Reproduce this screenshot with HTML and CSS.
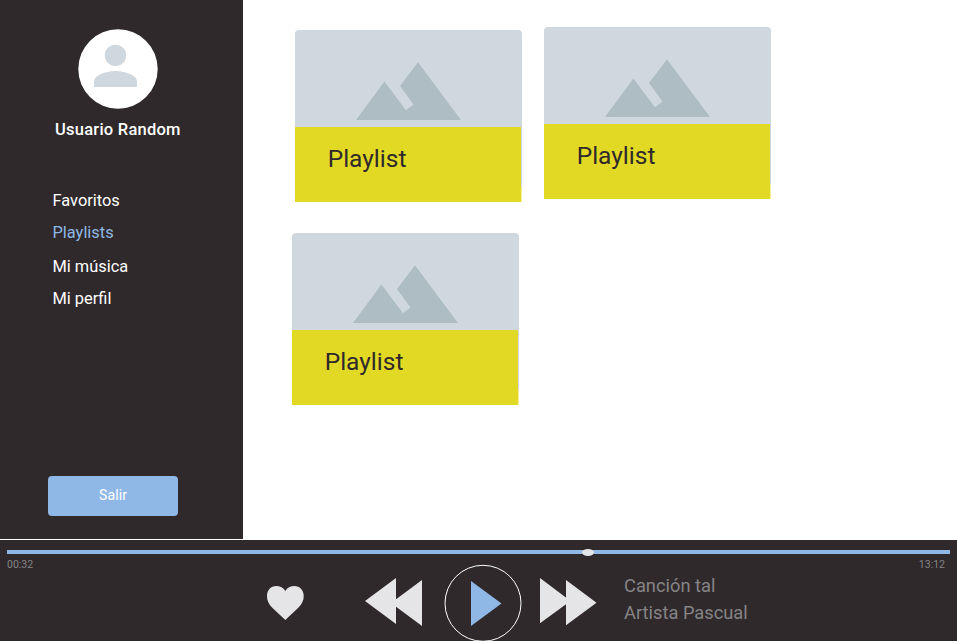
FILE: index.html
```html
<!DOCTYPE html>
<html lang="es">
<head>
<meta charset="utf-8">
<title>Playlists</title>
<link rel="stylesheet" href="styles.css">
</head>
<body>
<svg class="defs" width="0" height="0">
  <symbol id="mountains" viewBox="0 0 227 97"><path d="M61 90 89.4 51.5 111 80.2 118.5 74.5 105 56 123 32.3 166 90z"/></symbol>
</svg>
<div class="app">
  <div class="main">
    <aside class="sidebar">
      <svg class="avatar" viewBox="0 0 80 80">
        <circle cx="40" cy="40" r="39.7" fill="#fff"/>
        <circle cx="37.5" cy="26.4" r="10.7" fill="#cfd8de"/>
        <path d="M16 58v-5.3C16 45.500 30 42 37.500 42S59 45.500 59 52.700V58z" fill="#cfd8de"/>
      </svg>
      <div class="user">Usuario Random</div>
      <nav class="menu">
        <a class="item">Favoritos</a>
        <a class="item active">Playlists</a>
        <a class="item">Mi música</a>
        <a class="item">Mi perfil</a>
      </nav>
      <button class="logout">Salir</button>
    </aside>
    <main class="content">
      <div class="row">
        <article class="card"><svg class="cover"><use href="#mountains"/></svg><div class="label">Playlist</div></article>
        <article class="card raised"><svg class="cover"><use href="#mountains"/></svg><div class="label">Playlist</div></article>
      </div>
      <div class="row second">
        <article class="card"><svg class="cover"><use href="#mountains"/></svg><div class="label">Playlist</div></article>
      </div>
    </main>
  </div>
  <footer class="player">
    <div class="progress"><span class="thumb"></span></div>
    <div class="times"><span>00:32</span><span>13:12</span></div>
    <div class="controls">
      <svg class="heart" viewBox="0 0 37 35"><path d="M18.300 35 5.300 22.800C1.500 18.800 0 15.500 0 11 0 5 4 1 9.200 1c3.800 0 7.300 1.800 9.100 5 1.800-3.200 5.300-5 9.100-5 5.200 0 9.300 4 9.300 10 0 4.500-1.600 7.800-5.400 11.800z"/></svg>
      <svg class="rewind" viewBox="0 0 58 50"><path d="M0 24 31 1v46zM26 26 57 3v46z"/></svg>
      <svg class="play" viewBox="0 0 78 76"><circle cx="39" cy="38.300" r="38" fill="none" stroke="#fff"/><path d="M27 16v45l30.500-22.500z" fill="#8fb8e6"/></svg>
      <svg class="forward" viewBox="0 0 58 50"><path d="M0 1v45.300L30.500 24zM26 3v45.300L56.500 25.700z"/></svg>
      <div class="track"><div>Canción tal</div><div>Artista Pascual</div></div>
    </div>
  </footer>
</div>
</body>
</html>
```

FILE: styles.css
```css
* { box-sizing: border-box; }
body { margin: 0; background: #fff; font-family: Roboto, sans-serif; overflow: hidden; }
.defs { display: block; }
.app { width: 957px; height: 641px; display: flex; flex-direction: column; overflow: hidden; }
.main { display: flex; height: 540px; }
.sidebar { width: 243px; height: 539px; background: #2f292b; color: #fff; display: flex; flex-direction: column; }
.avatar { width: 80px; height: 80px; margin: 29px 0 0 78px; flex: none; }
.user { margin: 11px 0 0 55px; font-size: 16.5px; line-height: 20px; font-weight: 500; letter-spacing: 0.24px; white-space: nowrap; }
.menu { margin: 51px 0 0 52.5px; display: flex; flex-direction: column; gap: 12px; font-size: 16.4px; line-height: 20px; }
.active { color: #8fb8e6; margin-bottom: 2px; }
.logout { margin: auto 0 23px 48px; width: 130px; height: 40px; padding: 0 0 2px; border: 0; border-radius: 4px; background: #8fb8e6; color: #fff; font: 14px Roboto, sans-serif; letter-spacing: 0.1px; }
.content { padding: 30px 0 0 52px; }
.row { display: flex; gap: 22px; }
.second { margin: 31px 0 0 -3px; }
.card { width: 227px; height: 172px; border-radius: 4px 4px 0 0; background: linear-gradient(#cfd8de 157px, #f3ee9a 157px); overflow: hidden; }
.raised { margin-top: -3px; }
.cover { display: block; width: 227px; height: 97px; fill: #aebdc4; }
.label { width: 226.4px; height: 75px; padding: 18px 0 0 32.7px; background: #e2d924; color: #2f292b; font-size: 24.5px; line-height: 28px; }
.player { height: 101px; background: #2f292b; padding: 10px 7px 0; }
.progress { height: 4px; background: #8fb8e6; position: relative; }
.thumb { position: absolute; left: 575px; top: -1px; width: 12px; height: 7px; border-radius: 50%; background: #e5e5e7; }
.times { height: 11px; margin-top: 5px; padding-right: 5px; display: flex; justify-content: space-between; font-size: 10.5px; line-height: 11px; color: #868486; }
.controls { height: 76px; margin-top: -5px; padding-left: 260px; display: flex; align-items: flex-start; fill: #e5e5e7; }
.controls svg { flex: none; overflow: visible; }
.heart { width: 37px; height: 35px; margin-top: 20px; }
.rewind { width: 58px; height: 50px; margin: 12px 0 0 61px; }
.play { width: 78px; height: 76px; margin-left: 21px; }
.forward { width: 58px; height: 50px; margin: 12px 0 0 18px; }
.track { margin: 7px 0 0 26px; font-size: 18.3px; line-height: 27px; color: #868486; white-space: nowrap; }
```
